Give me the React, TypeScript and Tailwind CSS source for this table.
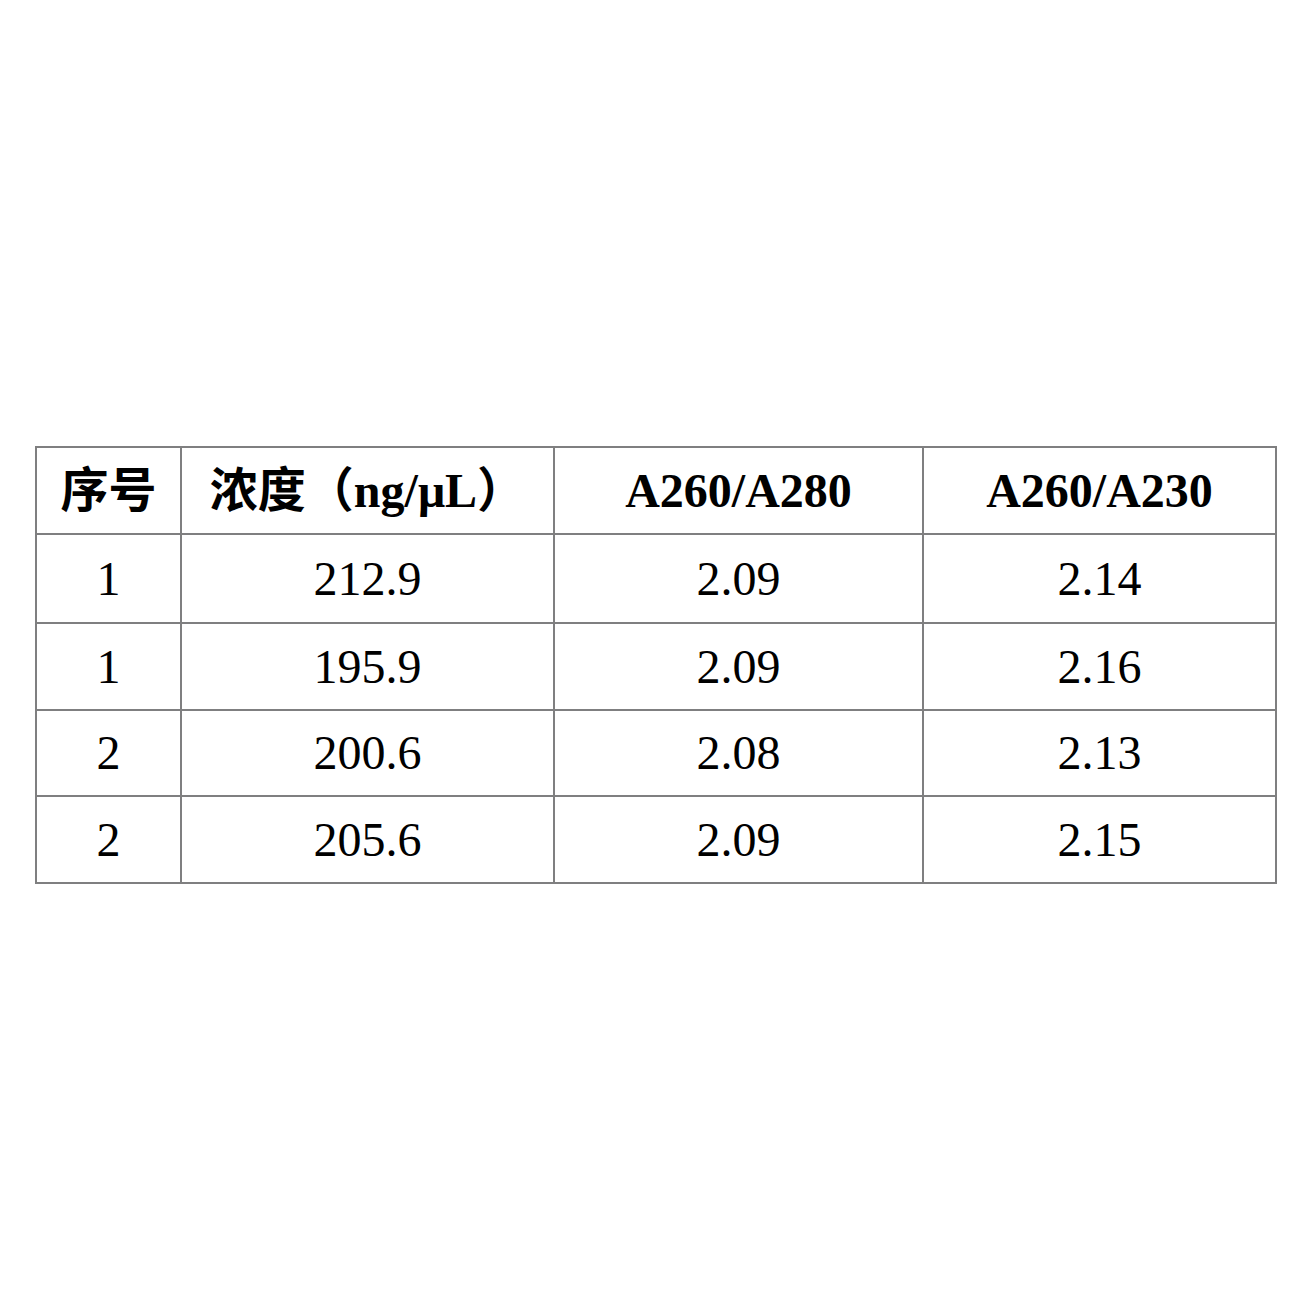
const rows = [
  { h: 'h-[89px]', cells: ['1', '212.9', '2.09', '2.14'] },
  { h: 'h-[87px]', cells: ['1', '195.9', '2.09', '2.16'] },
  { h: 'h-[86px]', cells: ['2', '200.6', '2.08', '2.13'] },
  { h: 'h-[87px]', cells: ['2', '205.6', '2.09', '2.15'] },
]

export default function App() {
  return (
    <div className="w-[1300px] h-[1300px] bg-white pt-[446px] pl-[35px]">
      <table
        className="border-collapse text-black text-[48px] leading-none"
        style={{ fontFamily: '"Liberation Serif", "Noto Sans CJK SC", serif' }}
      >
        <thead>
          <tr className="h-[87px] font-bold">
            <th className="w-[145px] border-2 border-[#7f7f80] text-center font-bold">序号</th>
            <th className="w-[373px] border-2 border-[#7f7f80] text-center font-bold">浓度（ng/μL）</th>
            <th className="w-[369px] border-2 border-[#7f7f80] text-center font-bold">A260/A280</th>
            <th className="w-[353px] border-2 border-[#7f7f80] text-center font-bold">A260/A230</th>
          </tr>
        </thead>
        <tbody>
          {rows.map((r, i) => (
            <tr key={i} className={r.h}>
              {r.cells.map((c, j) => (
                <td key={j} className="border-2 border-[#7f7f80] text-center">{c}</td>
              ))}
            </tr>
          ))}
        </tbody>
      </table>
    </div>
  )
}
